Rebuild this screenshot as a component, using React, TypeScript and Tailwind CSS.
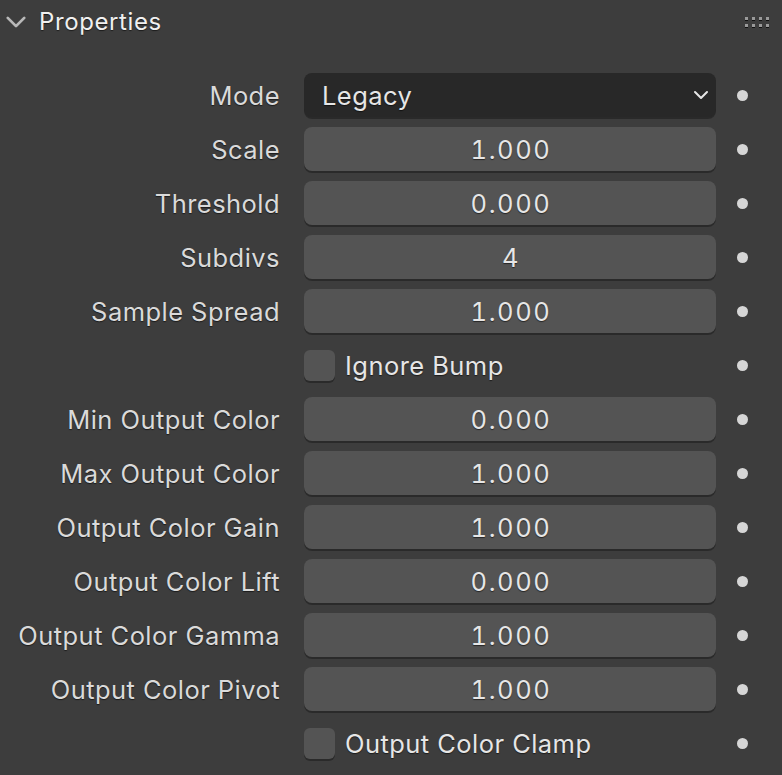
import React from 'react';

type Row =
  | { kind: 'select'; label: string; value: string }
  | { kind: 'number'; label: string; value: string }
  | { kind: 'check'; label: string };

const rows: Row[] = [
  { kind: 'select', label: 'Mode', value: 'Legacy' },
  { kind: 'number', label: 'Scale', value: '1.000' },
  { kind: 'number', label: 'Threshold', value: '0.000' },
  { kind: 'number', label: 'Subdivs', value: '4' },
  { kind: 'number', label: 'Sample Spread', value: '1.000' },
  { kind: 'check', label: 'Ignore Bump' },
  { kind: 'number', label: 'Min Output Color', value: '0.000' },
  { kind: 'number', label: 'Max Output Color', value: '1.000' },
  { kind: 'number', label: 'Output Color Gain', value: '1.000' },
  { kind: 'number', label: 'Output Color Lift', value: '0.000' },
  { kind: 'number', label: 'Output Color Gamma', value: '1.000' },
  { kind: 'number', label: 'Output Color Pivot', value: '1.000' },
  { kind: 'check', label: 'Output Color Clamp' },
];

const shadowText = '[text-shadow:0_1px_1px_rgba(0,0,0,0.55)]';

const Chevron: React.FC<{ className?: string }> = ({ className }) => (
  <svg viewBox="0 0 16 10" className={className} fill="none">
    <path d="M2 2 L8 8 L14 2" stroke="currentColor" strokeWidth="2" strokeLinecap="round" strokeLinejoin="round" />
  </svg>
);

const Grip = () => (
  <div className="grid grid-cols-4 gap-x-[4px] gap-y-[4px]">
    {Array.from({ length: 8 }).map((_, i) => (
      <span key={i} className="block w-[3px] h-[3px] bg-[#9a9a9a] shadow-[0_1px_0_#111]" />
    ))}
  </div>
);

const Field: React.FC<{ row: Row }> = ({ row }) => {
  if (row.kind === 'select') {
    return (
      <div className="h-[44px] rounded-[8px] bg-[#282828] shadow-[0_2px_0_rgba(0,0,0,0.3)] flex items-center pl-[18px] pr-[7px] text-[#e6e6e6]">
        <span className={`flex-1 pt-[1px] tracking-[0.45px] ${shadowText}`}>{row.value}</span>
        <Chevron className="w-[16px] h-[10px] text-[#e6e6e6]" />
      </div>
    );
  }
  if (row.kind === 'number') {
    return (
      <div className={`h-[44px] pt-[1px] pl-[2px] rounded-[8px] bg-[#545454] shadow-[0_2px_0_rgba(0,0,0,0.3)] flex items-center justify-center text-[#e6e6e6] tabular-nums tracking-[1.6px] ${shadowText}`}>
        {row.value}
      </div>
    );
  }
  return (
    <div className="h-[44px] flex items-center gap-[10px] text-[#e6e6e6]">
      <span className="block w-[31px] h-[31px] rounded-[6px] bg-[#545454] shadow-[0_2px_0_rgba(0,0,0,0.3)]" />
      <span className={`pt-[1px] tracking-[0.45px] ${shadowText}`}>{row.label}</span>
    </div>
  );
};

export default function App() {
  return (
    <div className="w-[782px] h-[775px] bg-[#3d3d3d] overflow-hidden text-[25.5px] leading-none" style={{ fontFamily: 'Inter, "Noto Sans", sans-serif' }}>
      <header className="h-[44px] flex items-center pl-[5px] pr-[13px]">
        <Chevron className="w-[22px] h-[14px] text-[#b8b8b8]" />
        <h1 className={`ml-[12px] flex-1 text-[#f0f0f0] text-[24px] tracking-[0.6px] ${shadowText}`}>Properties</h1>
        <Grip />
      </header>
      <div className="pt-[29px] flex flex-col gap-[10px]">
        {rows.map((row, i) => (
          <div key={i} className="flex items-center">
            <div className={`w-[280px] pt-[1px] text-right text-[#dadada] tracking-[0.45px] ${shadowText}`}>
              {row.kind === 'check' ? '' : row.label}
            </div>
            <div className="ml-[24px] w-[412px]">
              <Field row={row} />
            </div>
            <div className="flex-1 flex justify-center">
              <span className="block w-[11px] h-[11px] rounded-full bg-[#d6d6d6] -ml-[14px]" />
            </div>
          </div>
        ))}
      </div>
    </div>
  );
}
